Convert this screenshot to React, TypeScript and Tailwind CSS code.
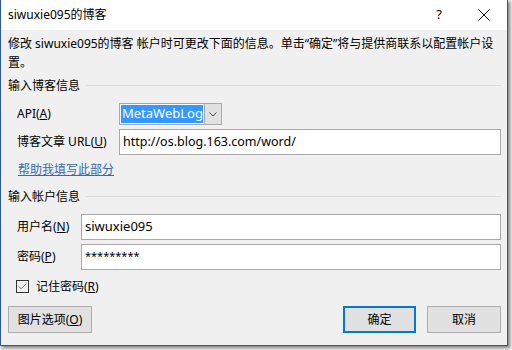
import { Check } from "lucide-react";

const font = {
  fontFamily: '"Segoe UI", "Noto Sans", "Noto Sans CJK SC", sans-serif',
};

function GroupHeader({ title }: { title: string }) {
  return (
    <div className="flex items-center h-[19px]">
      <span className="leading-[19px]">{title}</span>
      <div className="flex-1 h-px bg-[#dcdcdc] ml-[6px]" />
    </div>
  );
}

function TextBox({ value, className }: { value: string; className?: string }) {
  return (
    <div
      className={
        "flex-1 h-[26px] bg-white border border-[#a9a9a9] flex items-center pl-[3px] " +
        (className ?? "")
      }
    >
      {value}
    </div>
  );
}

export default function App() {
  return (
    <div
      className="w-[512px] h-[350px] bg-[#ececec] text-[12px] text-black"
      style={font}
    >
      <div className="w-[508px] h-[346px] border-x border-b border-[#2d5a97] bg-[#f0f0f0] flex flex-col shadow-[2px_2px_3px_rgba(0,0,0,0.45)]">
        {/* title bar */}
        <div className="h-[30px] bg-white flex items-center pl-[7px] pr-[17px]">
          <span className="flex-1">siwuxie095的博客</span>
          <span className="text-[13px] mr-[36px]">?</span>
          <svg width="12" height="12" viewBox="0 0 12 12">
            <path d="M0.5 0.5 L11.5 11.5 M11.5 0.5 L0.5 11.5" stroke="#111" strokeWidth="1" />
          </svg>
        </div>

        <div className="flex flex-col pl-[7px] pr-[6px]">
          <div className="mt-[4px] flex flex-col leading-[19px]">
            <span className="whitespace-nowrap">
              修改 siwuxie095的博客 帐户时可更改下面的信息。单击“确定”将与提供商联系以配置帐户设
            </span>
            <span>置。</span>
          </div>

          <div className="mt-[4px]">
            <GroupHeader title="输入博客信息" />
          </div>

          <div className="flex items-center mt-[8px] h-[22px]">
            <span className="w-[111px] shrink-0 pl-[9px]">
              API(<u>A</u>)
            </span>
            <div className="w-[103px] h-[22px] border border-[#a9a9a9] bg-white flex">
              <div className="flex-1 m-px bg-[#3399ff] text-white text-[13px] flex items-center pl-[1px]">
                MetaWebLog
              </div>
              <div className="w-[18px] bg-[#e1e1e1] border-l border-[#a9a9a9] flex items-center justify-center">
                <svg width="8" height="5" viewBox="0 0 8 5">
                  <path d="M0.5 0.5 L4 4 L7.5 0.5" fill="none" stroke="#444" strokeWidth="1" />
                </svg>
              </div>
            </div>
          </div>

          <div className="flex items-center mt-[4px]">
            <span className="w-[111px] shrink-0 pl-[9px]">
              博客文章 URL(<u>U</u>)
            </span>
            <TextBox value="http://os.blog.163.com/word/" className="text-[12.5px]" />
          </div>

          <a className="mt-[5px] ml-[10px] leading-[19px] text-[#3b6aa8] underline self-start">
            帮助我填写此部分
          </a>

          <div className="mt-[8px]">
            <GroupHeader title="输入帐户信息" />
          </div>

          <div className="flex items-center mt-[8px]">
            <span className="w-[73px] shrink-0 pl-[9px]">
              用户名(<u>N</u>)
            </span>
            <TextBox value="siwuxie095" className="text-[13px]" />
          </div>

          <div className="flex items-center mt-[4px]">
            <span className="w-[73px] shrink-0 pl-[9px]">
              密码(<u>P</u>)
            </span>
            <TextBox value="*********" className="text-[11px] items-start pt-[3px]" />
          </div>

          <div className="flex items-center mt-[7px] h-[19px] pl-[8px]">
            <div className="w-[13px] h-[13px] border border-[#333] bg-[#f0f0f0] flex items-center justify-center">
              <Check size={11} strokeWidth={1.5} color="#333" />
            </div>
            <span className="ml-[7px]">
              记住密码(<u>R</u>)
            </span>
          </div>

          <div className="flex mt-[10px]">
            <button className="w-[84px] h-[27px] bg-[#e1e1e1] border border-[#adadad]">
              图片选项(<u>O</u>)
            </button>
            <div className="flex-1" />
            <button className="w-[73px] h-[27px] bg-[#e1e1e1] border-2 border-[#0078d7]">
              确定
            </button>
            <button className="w-[74px] h-[27px] bg-[#e1e1e1] border border-[#adadad] ml-[11px]">
              取消
            </button>
          </div>
        </div>
      </div>
    </div>
  );
}
